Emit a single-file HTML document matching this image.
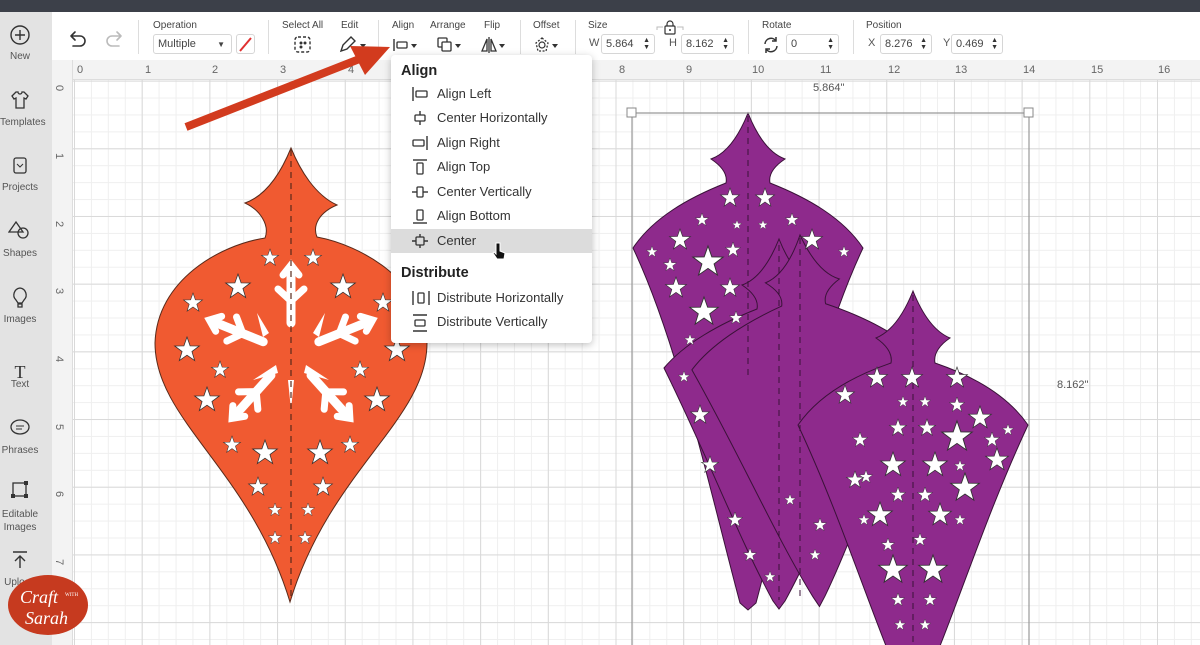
<!DOCTYPE html>
<html><head><meta charset="utf-8"><style>
*{box-sizing:border-box;margin:0;padding:0}
html,body{width:1200px;height:645px;overflow:hidden}
body{position:relative;font-family:"Liberation Sans",sans-serif;background:#fff;color:#333}
.abs{position:absolute}
#top{left:0;top:0;width:1200px;height:12px;background:#3c4049}
#tb{left:0;top:12px;width:1200px;height:48px;background:#fff}
.lbl{position:absolute;top:8px;font-size:10px;color:#444}
.sep{position:absolute;top:8px;width:1px;height:34px;background:#ddd}
.inp{position:absolute;top:22px;height:20px;border:1px solid #d6d6d6;border-radius:3px;font-size:11px;color:#444;padding:3px 4px;background:#fff}
.spin{position:absolute;right:4px;top:2px;font-size:7px;line-height:7px;color:#333}
.sm{position:absolute;top:25px;font-size:11px;color:#555}
#side{left:0;top:12px;width:52px;height:633px;background:#e3e3e3}
.si{position:absolute;width:40px;text-align:center;font-size:10px;color:#555;left:0}
#rulx{left:52px;top:60px;width:1148px;height:20px;background:#f3f3f3;border-bottom:1px solid #ddd}
#ruly{left:52px;top:60px;width:21px;height:585px;background:#f3f3f3;border-right:1px solid #ddd}
#grid{left:73px;top:80px;width:1127px;height:565px;
background:
linear-gradient(90deg,#d9d9d9 1px,transparent 1px) 1px 1.6px/67.7px 67.7px,
linear-gradient(0deg,#d9d9d9 1px,transparent 1px) 1px 1.6px/67.7px 67.7px,
linear-gradient(90deg,#efefef 1px,transparent 1px) 1px 1.6px/16.925px 16.925px,
linear-gradient(0deg,#efefef 1px,transparent 1px) 1px 1.6px/16.925px 16.925px,#fff}
.rx{position:absolute;top:4px;font-size:11px;color:#666}
.ry{position:absolute;left:56px;font-size:11px;color:#666;transform:rotate(90deg)}
#menu{left:391px;top:55px;width:201px;height:288px;background:#fff;border-radius:4px;box-shadow:0 2px 8px rgba(0,0,0,.25)}
.mh{position:absolute;left:10px;font-size:14.5px;font-weight:bold;color:#222}
.mi{position:absolute;left:0;width:201px;height:24px;font-size:13px;color:#333;padding-left:46px;line-height:24px}
.mi svg{position:absolute;left:20px;top:4px}
</style></head><body>
<div id="top" class="abs"></div>
<div id="tb" class="abs">
 <svg class="abs" style="left:66px;top:16px" width="60" height="24" viewBox="0 0 60 24" fill="none" stroke-width="1.6" stroke-linecap="round"><path d="M5 8h9a5 5 0 0 1 0 10H7M5 8l4-4M5 8l4 4" stroke="#333"/><path d="M55 8h-9a5 5 0 0 0 0 10h7M55 8l-4-4M55 8l-4 4" stroke="#bbb"/></svg>
 <div class="sep" style="left:138px"></div>
 <div class="lbl" style="left:153px">Operation</div>
 <div class="inp" style="left:153px;width:79px">Multiple<span style="position:absolute;right:6px;font-size:8px;top:5px">▼</span></div>
 <div class="inp" style="left:236px;width:19px;padding:0"><svg width="17" height="18"><path d="M3 16L14 3" stroke="#e03030" stroke-width="2"/></svg></div>
 <div class="sep" style="left:268px"></div>
 <div class="lbl" style="left:282px">Select All</div>
 <svg class="abs" style="left:293px;top:23px" width="20" height="20"><rect x="2" y="2" width="15" height="15" rx="3" fill="none" stroke="#333" stroke-width="1.4" stroke-dasharray="3 2"/><circle cx="8" cy="8" r="1.5" fill="#333"/><circle cx="12" cy="8" r="1.5" fill="#333"/><circle cx="8" cy="12" r="1.5" fill="#333"/></svg>
 <div class="lbl" style="left:341px">Edit</div>
 <svg class="abs" style="left:338px;top:23px" width="30" height="20"><path d="M3 16l2-6 8-8 4 4-8 8z" fill="none" stroke="#333" stroke-width="1.4"/><path d="M22 9l3 4 3-4z" fill="#333"/></svg>
 <div class="sep" style="left:378px"></div>
 <div class="lbl" style="left:392px">Align</div>
 <svg class="abs" style="left:392px;top:25px" width="28" height="16"><path d="M2 2v12" stroke="#333" stroke-width="1.4"/><rect x="5" y="5" width="10" height="6" rx="1" fill="none" stroke="#333" stroke-width="1.3"/><path d="M19 7l3 4 3-4z" fill="#333"/></svg>
 <div class="lbl" style="left:430px">Arrange</div>
 <svg class="abs" style="left:436px;top:24px" width="28" height="18"><rect x="2" y="2" width="9" height="9" rx="1" fill="none" stroke="#333" stroke-width="1.3"/><rect x="6" y="6" width="9" height="9" rx="1" fill="#fff" stroke="#333" stroke-width="1.3"/><path d="M19 8l3 4 3-4z" fill="#333"/></svg>
 <div class="lbl" style="left:484px">Flip</div>
 <svg class="abs" style="left:480px;top:24px" width="28" height="18"><path d="M9 1v16M7 3L2 15h5zM11 3l5 12h-5z" fill="none" stroke="#333" stroke-width="1.3"/><path d="M19 8l3 4 3-4z" fill="#333"/></svg>
 <div class="sep" style="left:520px"></div>
 <div class="lbl" style="left:533px">Offset</div>
 <svg class="abs" style="left:533px;top:24px" width="28" height="18"><path d="M9 2l6 5-2 8H5L3 7z" fill="none" stroke="#333" stroke-width="1.3" stroke-dasharray="2 1.5"/><circle cx="9" cy="9" r="3" fill="none" stroke="#333" stroke-width="1.2"/><path d="M19 8l3 4 3-4z" fill="#333"/></svg>
 <div class="sep" style="left:575px"></div>
 <div class="lbl" style="left:588px">Size</div>
 <div class="sm" style="left:589px">W</div>
 <div class="inp" style="left:601px;width:54px">5.864<span class="spin">▲<br>▼</span></div>
 <svg class="abs" style="left:655px;top:8px" width="30" height="16"><path d="M2 10V7h6M28 10V7h-6" stroke="#bbb" fill="none"/><rect x="10" y="6" width="10" height="8" rx="1" fill="none" stroke="#333" stroke-width="1.2"/><path d="M12 6V4a3 3 0 0 1 6 0v2" fill="none" stroke="#333" stroke-width="1.2"/><circle cx="15" cy="10" r="1" fill="#333"/></svg>
 <div class="sm" style="left:669px">H</div>
 <div class="inp" style="left:681px;width:53px">8.162<span class="spin">▲<br>▼</span></div>
 <div class="sep" style="left:748px"></div>
 <div class="lbl" style="left:762px">Rotate</div>
 <svg class="abs" style="left:762px;top:24px" width="18" height="18"><path d="M3 8a6 6 0 0 1 11-3M15 10a6 6 0 0 1-11 3" fill="none" stroke="#333" stroke-width="1.5"/><path d="M14 1v4h-4M4 17v-4h4" fill="none" stroke="#333" stroke-width="1.5"/></svg>
 <div class="inp" style="left:786px;width:53px">0<span class="spin">▲<br>▼</span></div>
 <div class="sep" style="left:853px"></div>
 <div class="lbl" style="left:866px">Position</div>
 <div class="sm" style="left:868px">X</div>
 <div class="inp" style="left:880px;width:52px">8.276<span class="spin">▲<br>▼</span></div>
 <div class="sm" style="left:943px">Y</div>
 <div class="inp" style="left:951px;width:52px">0.469<span class="spin">▲<br>▼</span></div>
</div>
<div id="side" class="abs">
 <svg class="abs" style="left:9px;top:12px" width="22" height="22"><circle cx="11" cy="11" r="9" fill="none" stroke="#333" stroke-width="1.4"/><path d="M11 6v10M6 11h10" stroke="#333" stroke-width="1.4"/></svg>
 <div class="si" style="top:39px">New</div>
 <svg class="abs" style="left:10px;top:78px" width="20" height="20"><path d="M6 2l-4 4 2 3 2-1v10h8V8l2 1 2-3-4-4h-2a2 2 0 0 1-4 0z" fill="none" stroke="#333" stroke-width="1.3"/></svg>
 <div class="si" style="top:105px">Templates</div>
 <svg class="abs" style="left:10px;top:143px" width="20" height="20"><rect x="4" y="3" width="12" height="15" rx="2" fill="none" stroke="#333" stroke-width="1.3"/><path d="M7 9l3 3 3-3" fill="none" stroke="#333"/></svg>
 <div class="si" style="top:170px">Projects</div>
 <svg class="abs" style="left:8px;top:208px" width="24" height="20"><path d="M8 2l7 10H1z" fill="none" stroke="#333" stroke-width="1.3"/><circle cx="15" cy="13" r="5" fill="none" stroke="#333" stroke-width="1.3"/></svg>
 <div class="si" style="top:236px">Shapes</div>
 <svg class="abs" style="left:10px;top:274px" width="20" height="22"><path d="M10 2a7 7 0 0 0-4 12l2 3h4l2-3a7 7 0 0 0-4-12zM8 18h4v3H8z" fill="none" stroke="#333" stroke-width="1.3"/></svg>
 <div class="si" style="top:302px">Images</div>
 <div class="si" style="top:350px;font-size:18px;font-family:'Liberation Serif',serif;color:#333">T</div>
 <div class="si" style="top:367px">Text</div>
 <svg class="abs" style="left:9px;top:406px" width="22" height="20"><ellipse cx="11" cy="9" rx="9" ry="7" fill="none" stroke="#333" stroke-width="1.3"/><path d="M7 8h8M7 11h6" stroke="#333"/></svg>
 <div class="si" style="top:433px">Phrases</div>
 <svg class="abs" style="left:9px;top:466px" width="22" height="22"><rect x="4" y="5" width="13" height="13" fill="none" stroke="#333" stroke-width="1.3"/><rect x="2" y="16" width="4" height="4" fill="#333"/><rect x="15" y="3" width="4" height="4" fill="#333"/><rect x="15" y="16" width="4" height="4" fill="#333"/></svg>
 <div class="si" style="top:496px;line-height:13px">Editable<br>Images</div>
 <svg class="abs" style="left:11px;top:538px" width="18" height="20"><path d="M2 2h14M9 18V6M4 11l5-5 5 5" fill="none" stroke="#333" stroke-width="1.4"/></svg>
 <div class="si" style="top:565px">Upload</div>
</div>
<div id="rulx" class="abs">
 <span class="rx" style="left:25px">0</span><span class="rx" style="left:93px">1</span><span class="rx" style="left:160px">2</span><span class="rx" style="left:228px">3</span><span class="rx" style="left:296px">4</span><span class="rx" style="left:364px">5</span><span class="rx" style="left:431px">6</span><span class="rx" style="left:499px">7</span><span class="rx" style="left:567px">8</span><span class="rx" style="left:634px">9</span><span class="rx" style="left:700px">10</span><span class="rx" style="left:768px">11</span><span class="rx" style="left:836px">12</span><span class="rx" style="left:903px">13</span><span class="rx" style="left:971px">14</span><span class="rx" style="left:1039px">15</span><span class="rx" style="left:1106px">16</span>
</div>
<div id="ruly" class="abs"></div>
<div class="abs" style="left:0;top:0">
 <span class="ry" style="top:82px">0</span><span class="ry" style="top:150px">1</span><span class="ry" style="top:218px">2</span><span class="ry" style="top:285px">3</span><span class="ry" style="top:353px">4</span><span class="ry" style="top:421px">5</span><span class="ry" style="top:488px">6</span><span class="ry" style="top:556px">7</span>
</div>
<div id="grid" class="abs"></div>
<svg class="abs" style="left:0;top:0" width="1200" height="645">
 <defs>
  <polygon id="st" points="0,-10 2.4,-3.2 9.5,-3.1 3.8,1.2 5.9,8.1 0,4 -5.9,8.1 -3.8,1.2 -9.5,-3.1 -2.4,-3.2" fill="#fff" stroke="#333" stroke-width="0.6"/>
  <g id="arm"><path d="M0,-30V-80" stroke-width="9"/><path d="M0,-52L-13,-64M0,-52L13,-64" stroke-width="7"/><path d="M-8,-78L0,-88L8,-78" stroke-width="7"/></g>
 </defs>
 <path d="M291,148 C300,170 315,195 337,205 C320,212 312,225 317,237 C360,245 425,280 427,343 C427,420 330,470 290,602 C250,470 155,420 155,343 C157,280 220,245 265,238 C270,225 260,210 245,203 C268,195 282,170 291,148 Z" fill="#f05a31" stroke="#5a2a1a" stroke-width="1"/>
 <g transform="translate(291,353)" stroke="#fff" stroke-linecap="round" fill="none">
  <use href="#arm"/>
  <use href="#arm" transform="rotate(-68)"/>
  <use href="#arm" transform="rotate(68)"/>
  <use href="#arm" transform="rotate(-138)"/>
  <use href="#arm" transform="rotate(138)"/>
 </g>
 <g fill="#fff"><path d="M257,313l12,20l-6,4z"/><path d="M325,313l-12,20l6,4z"/><path d="M253,380l25,-7l-2,-8z"/><path d="M329,380l-25,-7l2,-8z"/><path d="M288,380h6l-3,30z"/></g>
 <path d="M291,150V600" stroke="#5a2a1a" stroke-width="1.2" stroke-dasharray="6 5"/>
 <g>
  <use href="#st" transform="translate(270,258) scale(.9)"/><use href="#st" transform="translate(313,258) scale(.9)"/>
  <use href="#st" transform="translate(238,287) scale(1.3)"/><use href="#st" transform="translate(343,287) scale(1.3)"/>
  <use href="#st" transform="translate(193,303) scale(1)"/><use href="#st" transform="translate(383,303) scale(1)"/>
  <use href="#st" transform="translate(187,350) scale(1.3)"/><use href="#st" transform="translate(397,350) scale(1.3)"/>
  <use href="#st" transform="translate(220,370) scale(.9)"/><use href="#st" transform="translate(360,370) scale(.9)"/>
  <use href="#st" transform="translate(207,400) scale(1.3)"/><use href="#st" transform="translate(377,400) scale(1.3)"/>
  <use href="#st" transform="translate(232,445) scale(.9)"/><use href="#st" transform="translate(265,453) scale(1.3)"/>
  <use href="#st" transform="translate(320,453) scale(1.3)"/><use href="#st" transform="translate(350,445) scale(.9)"/>
  <use href="#st" transform="translate(258,487) scale(1)"/><use href="#st" transform="translate(323,487) scale(1)"/>
  <use href="#st" transform="translate(275,510) scale(.7)"/><use href="#st" transform="translate(308,510) scale(.7)"/>
  <use href="#st" transform="translate(275,538) scale(.7)"/><use href="#st" transform="translate(305,538) scale(.7)"/>
 </g>
 <g fill="#8e2a8c" stroke="#3a1238" stroke-width="1">
  <path transform="translate(748,113)" d="M0,0 C8,20 20,40 37,46 C28,52 20,60 22,70 C60,85 95,105 115,135 C70,230 40,370 8,490 L0,497 L-8,490 C-40,370 -70,230 -115,135 C-95,105 -60,85 -22,70 C-20,60 -28,52 -37,46 C-20,40 -8,20 0,0Z"/>
  <path transform="translate(779,239)" d="M0,0 C8,20 20,40 37,46 C28,52 20,60 22,70 C60,85 95,105 115,129 C70,220 40,300 6,362 L0,370 L-6,362 C-40,300 -70,220 -115,129 C-95,105 -60,85 -22,70 C-20,60 -28,52 -37,46 C-20,40 -8,20 0,0Z"/>
  <path transform="translate(800,235) rotate(-3)" d="M0,0 C8,20 20,40 37,46 C28,52 20,60 22,70 C60,85 95,105 115,129 C70,220 40,300 6,362 L0,372 L-6,362 C-40,300 -70,220 -115,129 C-95,105 -60,85 -22,70 C-20,60 -28,52 -37,46 C-20,40 -8,20 0,0Z"/>
  <path transform="translate(913,291)" d="M0,0 C8,20 20,40 37,47 C28,53 20,62 22,72 C60,85 95,105 115,134 C70,230 40,330 8,400 L0,410 L-8,400 C-40,330 -70,230 -115,134 C-95,105 -60,85 -22,72 C-20,62 -28,53 -37,47 C-20,40 -8,20 0,0Z"/>
 </g>
 <g stroke="#3a1238" stroke-width="1" stroke-dasharray="6 5"><path d="M748,116V380"/><path d="M800,238V600"/><path d="M779,245V600"/><path d="M913,295V645"/></g>
 <g>
  <use href="#st" transform="translate(730,198)"/><use href="#st" transform="translate(765,198)"/>
  <use href="#st" transform="translate(702,220) scale(.7)"/><use href="#st" transform="translate(737,225) scale(.5)"/><use href="#st" transform="translate(763,225) scale(.5)"/><use href="#st" transform="translate(792,220) scale(.7)"/>
  <use href="#st" transform="translate(680,240) scale(1.1)"/><use href="#st" transform="translate(812,240) scale(1.1)"/>
  <use href="#st" transform="translate(652,252) scale(.6)"/><use href="#st" transform="translate(844,252) scale(.6)"/>
  <use href="#st" transform="translate(708,262) scale(1.6)"/><use href="#st" transform="translate(733,250) scale(.8)"/><use href="#st" transform="translate(670,265) scale(.7)"/>
  <use href="#st" transform="translate(676,288) scale(1.1)"/><use href="#st" transform="translate(730,288) scale(1)"/><use href="#st" transform="translate(704,312) scale(1.5)"/><use href="#st" transform="translate(736,318) scale(.7)"/>
  <use href="#st" transform="translate(690,340) scale(.6)"/><use href="#st" transform="translate(684,377) scale(.6)"/><use href="#st" transform="translate(700,415) scale(1)"/>
  <use href="#st" transform="translate(710,465) scale(.9)"/><use href="#st" transform="translate(735,520) scale(.8)"/><use href="#st" transform="translate(750,555) scale(.7)"/><use href="#st" transform="translate(770,577) scale(.6)"/>
  <use href="#st" transform="translate(820,525) scale(.7)"/><use href="#st" transform="translate(815,555) scale(.6)"/><use href="#st" transform="translate(790,500) scale(.6)"/>
  <use href="#st" transform="translate(912,378) scale(1.1)"/><use href="#st" transform="translate(877,378) scale(1.1)"/><use href="#st" transform="translate(957,378) scale(1.1)"/>
  <use href="#st" transform="translate(903,402) scale(.6)"/><use href="#st" transform="translate(925,402) scale(.6)"/><use href="#st" transform="translate(957,405) scale(.8)"/>
  <use href="#st" transform="translate(980,418) scale(1.2)"/><use href="#st" transform="translate(1008,430) scale(.6)"/><use href="#st" transform="translate(992,440) scale(.8)"/>
  <use href="#st" transform="translate(898,428) scale(.9)"/><use href="#st" transform="translate(927,428) scale(.9)"/><use href="#st" transform="translate(957,437) scale(1.6)"/>
  <use href="#st" transform="translate(893,465) scale(1.3)"/><use href="#st" transform="translate(935,465) scale(1.3)"/><use href="#st" transform="translate(997,460) scale(1.2)"/><use href="#st" transform="translate(960,466) scale(.6)"/>
  <use href="#st" transform="translate(866,477) scale(.7)"/><use href="#st" transform="translate(898,495) scale(.8)"/><use href="#st" transform="translate(925,495) scale(.8)"/><use href="#st" transform="translate(965,488) scale(1.5)"/>
  <use href="#st" transform="translate(880,515) scale(1.3)"/><use href="#st" transform="translate(940,515) scale(1.2)"/><use href="#st" transform="translate(864,520) scale(.6)"/><use href="#st" transform="translate(960,520) scale(.6)"/>
  <use href="#st" transform="translate(888,545) scale(.7)"/><use href="#st" transform="translate(920,540) scale(.7)"/>
  <use href="#st" transform="translate(893,570) scale(1.5)"/><use href="#st" transform="translate(933,570) scale(1.5)"/>
  <use href="#st" transform="translate(898,600) scale(.7)"/><use href="#st" transform="translate(930,600) scale(.7)"/><use href="#st" transform="translate(900,625) scale(.6)"/><use href="#st" transform="translate(925,625) scale(.6)"/>
  <use href="#st" transform="translate(845,395) scale(1)"/><use href="#st" transform="translate(860,440) scale(.8)"/><use href="#st" transform="translate(855,480) scale(.9)"/>
 </g>
 <path d="M632,645V113H1029V645" fill="none" stroke="#999" stroke-width="1.2"/>
 <rect x="627" y="108" width="9" height="9" fill="#fff" stroke="#888"/>
 <rect x="1024" y="108" width="9" height="9" fill="#fff" stroke="#888"/>
 <text x="813" y="91" font-size="11" fill="#555" font-family="Liberation Sans">5.864"</text>
 <text x="1057" y="388" font-size="11" fill="#555" font-family="Liberation Sans">8.162"</text>
 <path d="M186,127L362,58" stroke="#d23b1e" stroke-width="8"/>
 <path d="M390,47L350,46L365,75Z" fill="#d23b1e"/>
 <ellipse cx="48" cy="605" rx="40" ry="30" fill="#c63a1f"/>
 <text x="20" y="603" font-size="18" font-style="italic" fill="#fff" font-family="Liberation Serif">Craft</text>
 <text x="65" y="596" font-size="5" fill="#fff" font-family="Liberation Serif">WITH</text>
 <text x="25" y="624" font-size="18" font-style="italic" fill="#fff" font-family="Liberation Serif">Sarah</text>
</svg>
<div id="menu" class="abs">
 <div class="mh" style="top:8px">Align</div>
 <div class="mi" style="top:27px"><svg width="18" height="16"><path d="M2 1v14" stroke="#333" stroke-width="1.4"/><rect x="5" y="5" width="11" height="6" rx="1" fill="none" stroke="#333" stroke-width="1.3"/></svg>Align Left</div>
 <div class="mi" style="top:51px"><svg width="18" height="16"><path d="M9 1v14" stroke="#333" stroke-width="1.4"/><rect x="4" y="5" width="10" height="6" rx="1" fill="#fff" stroke="#333" stroke-width="1.3"/></svg>Center Horizontally</div>
 <div class="mi" style="top:76px"><svg width="18" height="16"><path d="M16 1v14" stroke="#333" stroke-width="1.4"/><rect x="2" y="5" width="11" height="6" rx="1" fill="none" stroke="#333" stroke-width="1.3"/></svg>Align Right</div>
 <div class="mi" style="top:100px"><svg width="18" height="16"><path d="M2 1h14" stroke="#333" stroke-width="1.4"/><rect x="6" y="4" width="6" height="11" rx="1" fill="none" stroke="#333" stroke-width="1.3"/></svg>Align Top</div>
 <div class="mi" style="top:125px"><svg width="18" height="16"><path d="M1 8h16" stroke="#333" stroke-width="1.4"/><rect x="6" y="3" width="6" height="10" rx="1" fill="#fff" stroke="#333" stroke-width="1.3"/></svg>Center Vertically</div>
 <div class="mi" style="top:149px"><svg width="18" height="16"><path d="M2 15h14" stroke="#333" stroke-width="1.4"/><rect x="6" y="2" width="6" height="10" rx="1" fill="none" stroke="#333" stroke-width="1.3"/></svg>Align Bottom</div>
 <div class="mi" style="top:174px;background:#dcdcdc"><svg width="18" height="16"><path d="M1 8h16M9 1v14" stroke="#333" stroke-width="1.4"/><rect x="5" y="4" width="8" height="8" rx="1" fill="#dcdcdc" stroke="#333" stroke-width="1.3"/></svg>Center</div>
 <svg class="abs" style="left:101px;top:186px" width="14" height="20"><path d="M4 2v11l-2-2-1 1 4 6h7l1-6-5-2V2z" fill="#111" stroke="#fff"/></svg>
 <div class="mh" style="top:210px">Distribute</div>
 <div class="mi" style="top:231px"><svg width="20" height="16"><path d="M2 1v14M18 1v14" stroke="#333" stroke-width="1.4"/><rect x="7" y="3" width="6" height="10" rx="1" fill="none" stroke="#333" stroke-width="1.3"/></svg>Distribute Horizontally</div>
 <div class="mi" style="top:255px"><svg width="18" height="18"><path d="M2 1h14M2 17h14" stroke="#333" stroke-width="1.4"/><rect x="4" y="6" width="10" height="6" rx="1" fill="none" stroke="#333" stroke-width="1.3"/></svg>Distribute Vertically</div>
</div>
</body></html>
